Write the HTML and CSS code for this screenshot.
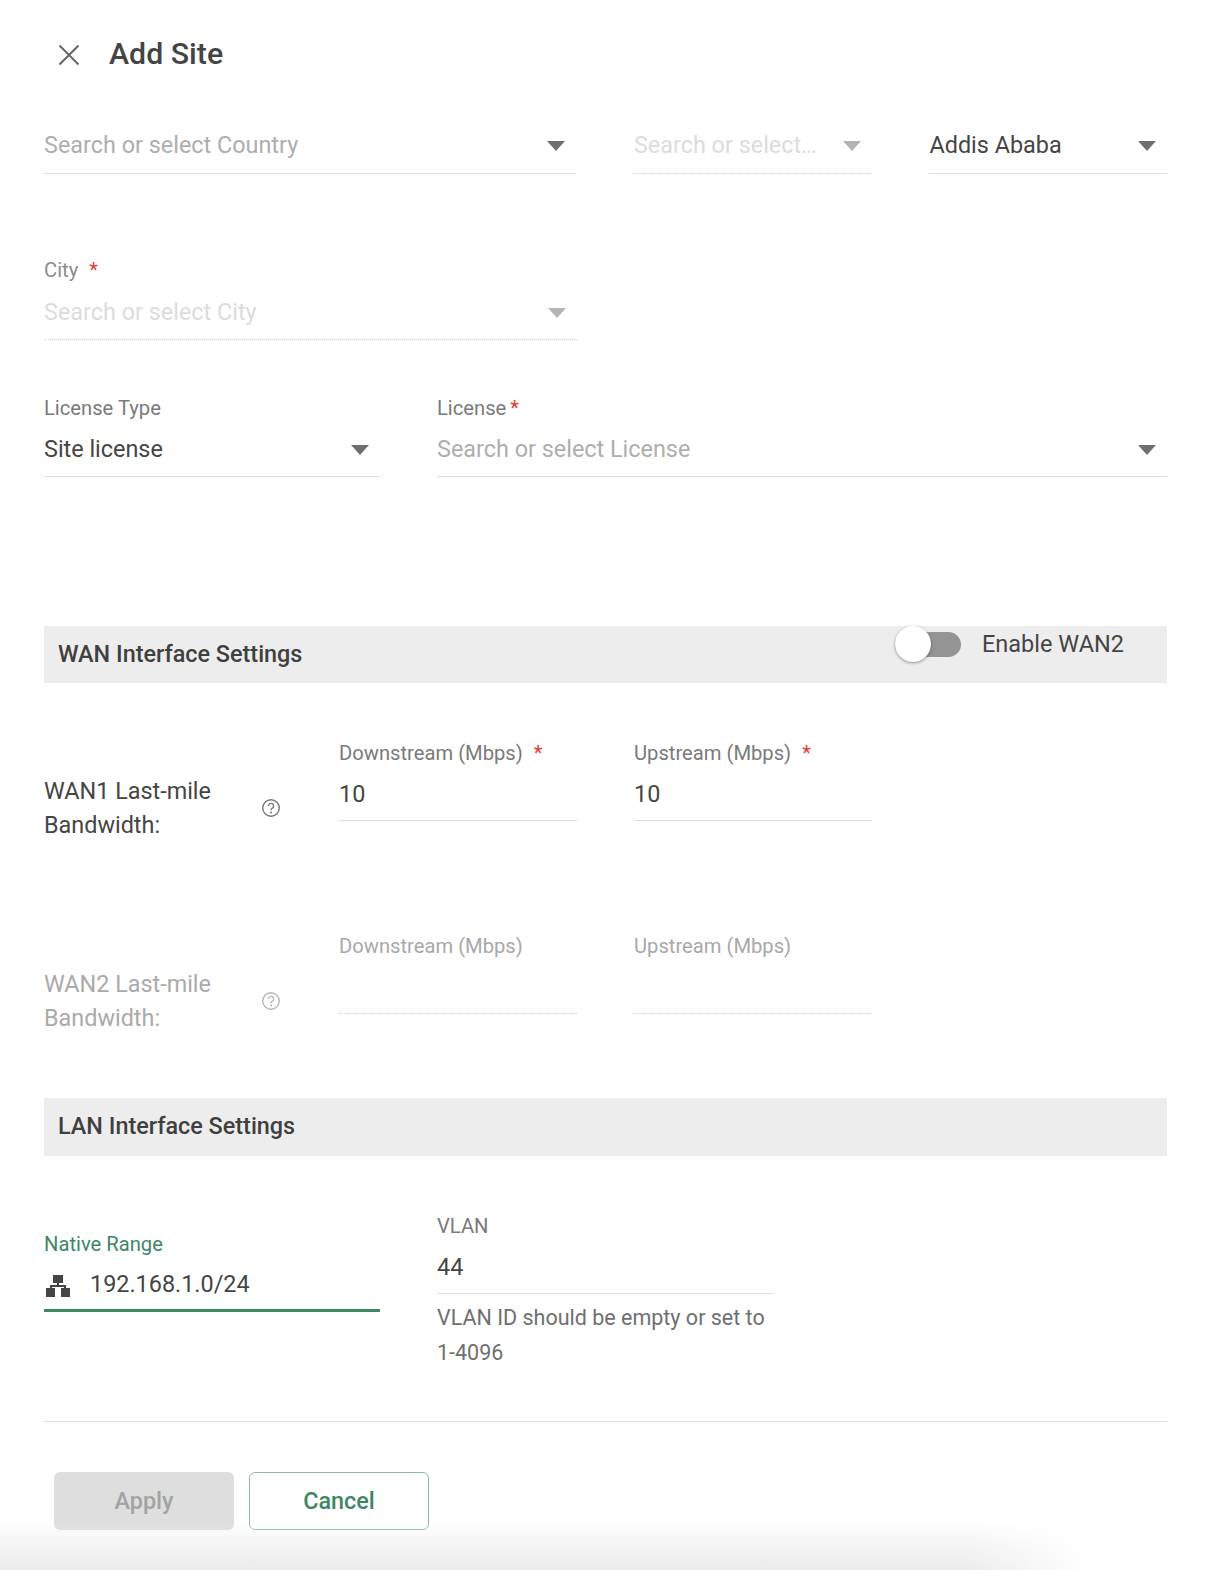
FILE: index.html
```html
<!DOCTYPE html>
<html lang="en">
<head>
<meta charset="utf-8">
<title>Add Site</title>
<link rel="stylesheet" href="styles.css">
</head>
<body>
<div class="page">
  <header class="head">
    <svg class="close" viewBox="0 0 24 24" width="24" height="24"><path d="M2.5 2.5 21.5 21.5M21.5 2.5 2.5 21.5"/></svg>
    <h1>Add Site</h1>
  </header>

  <div class="row row-location">
    <div class="field w-country"><div class="control"><span class="ph">Search or select Country</span><i class="caret"></i></div></div>
    <div class="field w-state off"><div class="control"><span class="ph">Search or select…</span><i class="caret"></i></div></div>
    <div class="field w-zone"><div class="control"><span class="val">Addis Ababa</span><i class="caret"></i></div></div>
  </div>

  <div class="row row-city">
    <div class="field w-country off">
      <label>City<b class="req wide">*</b></label>
      <div class="control"><span class="ph">Search or select City</span><i class="caret"></i></div>
    </div>
  </div>

  <div class="row row-license">
    <div class="field w-type">
      <label>License Type</label>
      <div class="control"><span class="val">Site license</span><i class="caret"></i></div>
    </div>
    <div class="field w-license">
      <label>License<b class="req">*</b></label>
      <div class="control"><span class="ph">Search or select License</span><i class="caret"></i></div>
    </div>
  </div>

  <section class="band band-wan">
    <h2>WAN Interface Settings</h2>
    <div class="switch-wrap">
      <span class="switch"><span class="knob"></span></span>
      <span class="switch-text">Enable WAN2</span>
    </div>
  </section>

  <div class="row row-bw row-wan1">
    <div class="bw-label">
      <span>WAN1 Last-mile<br>Bandwidth:</span>
      <svg class="help" viewBox="0 0 20 20" width="20" height="20"><circle cx="10" cy="10" r="8.3"/><path d="M7.4 8a2.6 2.6 0 1 1 4 2.2c-.9.6-1.4 1-1.4 2"/><circle class="dot" cx="10" cy="14.6" r="1"/></svg>
    </div>
    <div class="field w-bw">
      <label>Downstream (Mbps)<b class="req wide">*</b></label>
      <div class="control"><span class="val">10</span></div>
    </div>
    <div class="field w-bw">
      <label>Upstream (Mbps)<b class="req wide">*</b></label>
      <div class="control"><span class="val">10</span></div>
    </div>
  </div>

  <div class="row row-bw row-wan2 off">
    <div class="bw-label">
      <span>WAN2 Last-mile<br>Bandwidth:</span>
      <svg class="help" viewBox="0 0 20 20" width="20" height="20"><circle cx="10" cy="10" r="8.3"/><path d="M7.4 8a2.6 2.6 0 1 1 4 2.2c-.9.6-1.4 1-1.4 2"/><circle class="dot" cx="10" cy="14.6" r="1"/></svg>
    </div>
    <div class="field w-bw">
      <label>Downstream (Mbps)</label>
      <div class="control"></div>
    </div>
    <div class="field w-bw">
      <label>Upstream (Mbps)</label>
      <div class="control"></div>
    </div>
  </div>

  <section class="band band-lan">
    <h2>LAN Interface Settings</h2>
  </section>

  <div class="row row-lan">
    <div class="field w-type focus">
      <label>Native Range</label>
      <div class="control">
        <svg class="net" viewBox="0 0 24 22" width="24" height="22"><path d="M7 0h10v8h-4v2h7v3h4v9H15v-9h3v-1H6v1h3v9H0v-9h4v-3h7V8H7z"/></svg>
        <span class="val">192.168.1.0/24</span>
      </div>
    </div>
    <div class="field w-vlan">
      <label>VLAN</label>
      <div class="control"><span class="val">44</span></div>
      <p class="hint">VLAN ID should be empty or set to 1-4096</p>
    </div>
  </div>

  <hr class="rule">

  <div class="actions">
    <button class="btn btn-apply" type="button" disabled>Apply</button>
    <button class="btn btn-cancel" type="button">Cancel</button>
  </div>
</div>
<div class="fade"></div>
</body>
</html>
```

FILE: styles.css
```css
* { box-sizing: border-box; }
html, body { margin: 0; background: #fff; }
body {
  height: 1570px;
  overflow: hidden;
  position: relative;
  font-family: Roboto, "Liberation Sans", sans-serif;
  color: #454545;
}
.page { padding: 0 43px 0 44px; }

.head { display: flex; align-items: center; height: 110px; padding-left: 13px; }
.close { fill: none; stroke: #666; stroke-width: 2; }
.head h1 { margin: -2px 0 0 28px; font-size: 30.3px; font-weight: 500; color: #444; line-height: 40px; }

.row { display: flex; }
.row-location { gap: 57px; height: 64px; }
.row-city { margin-top: 83px; }
.row-license { margin-top: 54px; gap: 57px; }
.row-bw { height: 90px; }
.row-wan1 { margin-top: 56px; }
.row-wan2 { margin-top: 103px; }
.row-lan { margin-top: 56px; gap: 57px; align-items: flex-start; }

.field { display: flex; flex-direction: column; }
.w-country { width: 533px; }
.w-state { width: 239px; margin-left: 1px; }
.w-zone { width: 238px; }
.w-type { width: 336px; }
.w-license { width: 730px; }
.w-bw { width: 238px; margin-right: 57px; }
.w-vlan { width: 336px; }

.field label {
  font-size: 20.2px;
  line-height: 28px;
  height: 28px;
  color: #7a7a7a;
}
.req { color: #e53935; font-weight: 400; margin-left: 4px; }
.req.wide { margin-left: 11px; }

.control {
  display: flex;
  align-items: center;
  height: 55px;
  border-bottom: 1px solid #dedede;
  font-size: 23.4px;
  position: relative;
}
.ph { color: #aeaeae; }
.val { color: #454545; }
.caret {
  position: absolute;
  right: 11px;
  top: 23px;
  width: 0;
  height: 0;
  border-left: 9px solid transparent;
  border-right: 9px solid transparent;
  border-top: 10px solid #6f6f6f;
}
.row-location .control { height: 64px; padding-top: 7px; }
.row-location .caret { top: 31px; }
.row-bw .control { height: 54px; }

.off .control { border-bottom: 1px dotted #d0d0d0; }
.off .ph { color: #dcdcdc; }
.off .caret { border-top-color: #b4b4b4; }
.off label { color: #a8a8a8; }
.row-city .field.off label { color: #8c8c8c; margin-top: -1px; margin-bottom: 1px; }

.band {
  background: #ededed;
  position: relative;
  display: flex;
  align-items: center;
  padding: 0 0 2px 14px;
}
.band h2 { margin: 0; font-size: 23.4px; font-weight: 500; color: #3f3f3f; }
.band-wan { margin-top: 149px; height: 57px; }
.band-lan { margin-top: 76px; height: 58px; }

.switch-wrap { position: absolute; left: 851px; top: 0; display: flex; align-items: center; height: 36px; }
.switch { display: block; width: 66px; height: 25px; border-radius: 13px; background: #949494; position: relative; }
.knob {
  position: absolute;
  left: 0;
  top: -6px;
  width: 36px;
  height: 36px;
  border-radius: 50%;
  background: #fff;
  box-shadow: 0 1px 3px rgba(0, 0, 0, .4);
}
.switch-text { font-size: 23.5px; margin-left: 21px; color: #454545; }

.bw-label {
  width: 295px;
  height: 68px;
  margin-top: 35px;
  display: flex;
  align-items: center;
  justify-content: space-between;
  padding-right: 58px;
  font-size: 23.4px;
  line-height: 34px;
}
.help { fill: none; stroke: #777; stroke-width: 1.4; }
.help .dot { fill: #777; stroke: none; }
.off .bw-label { color: #aaa; }
.off .help { stroke: #b8b8b8; }
.off .help .dot { fill: #b8b8b8; }

.row-lan .control { height: 54px; }
.focus { padding-top: 18px; }
.focus label { color: #3d8765; }
.focus .control { border-bottom: 3px solid #3d8765; padding-top: 1px; }
.net { fill: #454545; width: 26px; margin: 3px 19px 0 1px; }
.hint { margin: 6px 0 0; font-size: 21.5px; line-height: 35px; color: #6f6f6f; }

.rule { margin: 51px 0 0; border: 0; border-top: 1px solid #dedede; }

.actions { display: flex; gap: 15px; margin-top: 50px; padding-left: 10px; }
.btn {
  width: 180px;
  height: 58px;
  border-radius: 6px;
  font-family: inherit;
  font-size: 23.4px;
  font-weight: 500;
  background: #fff;
}
.btn-apply { background: #dedede; color: #a3a3a3; border: 0; }
.btn-cancel { color: #3d8765; border: 1px solid #8bbba5; }

.fade {
  position: absolute;
  left: 0;
  right: 0;
  bottom: 0;
  height: 50px;
  pointer-events: none;
  background: linear-gradient(to top, #ebebeb, rgba(235, 235, 235, 0));
  -webkit-mask-image: linear-gradient(to right, #000 80%, transparent 90%);
  mask-image: linear-gradient(to right, #000 80%, transparent 90%);
}
```
